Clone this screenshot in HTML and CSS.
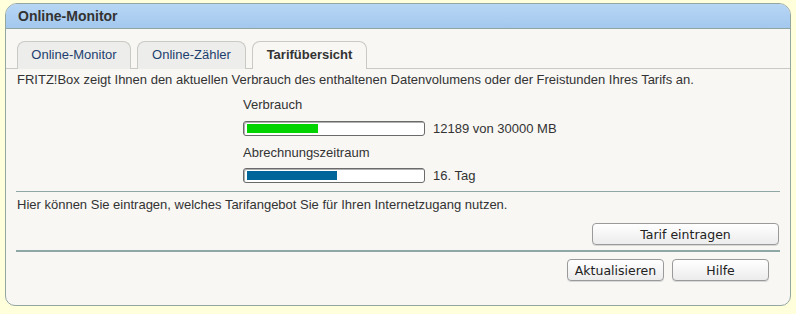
FILE: index.html
```html
<!DOCTYPE html>
<html lang="de">
<head>
<meta charset="utf-8">
<title>Online-Monitor</title>
<link rel="stylesheet" href="styles.css">
</head>
<body>
<div class="panel">
  <div class="header">Online-Monitor</div>
  <div class="body">
    <div class="tabs">
      <div class="tab tab-1">Online-Monitor</div>
      <div class="tab tab-2">Online-Zähler</div>
      <div class="tab tab-3 active">Tarifübersicht</div>
    </div>
    <div class="content">
      <p class="text intro">FRITZ!Box zeigt Ihnen den aktuellen Verbrauch des enthaltenen Datenvolumens oder der Freistunden Ihres Tarifs an.</p>
      <div class="meters">
        <div class="label">Verbrauch</div>
        <div class="meter-row meter-row-1">
          <div class="bar"><div class="fill fill-green" style="width:40.6%"></div></div>
          <span class="value">12189 von 30000 MB</span>
        </div>
        <div class="label">Abrechnungszeitraum</div>
        <div class="meter-row meter-row-2">
          <div class="bar"><div class="fill fill-blue" style="width:51.6%"></div></div>
          <span class="value">16. Tag</span>
        </div>
      </div>
      <div class="rule"></div>
      <p class="text info">Hier können Sie eintragen, welches Tarifangebot Sie für Ihren Internetzugang nutzen.</p>
      <div class="btn-row btn-row-tarif">
        <button class="btn btn-tarif">Tarif eintragen</button>
      </div>
      <div class="rule rule-thick"></div>
      <div class="btn-row btn-row-main">
        <button class="btn btn-main">Aktualisieren</button>
        <button class="btn btn-main">Hilfe</button>
      </div>
    </div>
  </div>
</div>
</body>
</html>
```

FILE: styles.css
```css
html, body {
  margin: 0;
  padding: 0;
}
body {
  background: #ffffdc;
  font-family: "Liberation Sans", Arial, sans-serif;
  font-size: 13px;
  color: #333;
  padding: 3px 5px 0 5px;
}
.panel {
  width: 784px;
  height: 301px;
  border: 1px solid #94a6a0;
  border-radius: 12px 12px 10px 10px;
  background: #f8f7f3;
  overflow: hidden;
  box-sizing: content-box;
}
.header {
  height: 24px;
  background: linear-gradient(#b7d6f4, #a3c8ee);
  border-bottom: 1px solid #8fa59f;
  font-weight: bold;
  font-size: 14px;
  line-height: 24px;
  padding-left: 12px;
  color: #333;
}
.body {
  padding-top: 12px;
}
.tabs {
  display: flex;
  gap: 6px;
  padding-left: 11px;
  border-bottom: 1px solid #c9c9c6;
  height: 27px;
}
.tab {
  box-sizing: border-box;
  height: 28px;
  border: 1px solid #c9c9c6;
  border-bottom: none;
  border-radius: 8px 8px 0 0;
  background: #ededeb;
  color: #1d3f6e;
  font-size: 13px;
  line-height: 25px;
  text-align: center;
}
.tab-1 { width: 114px; }
.tab-2 { width: 109px; }
.tab-3 { width: 115px; }
.tab.active {
  background: #f8f7f3;
  color: #333;
  font-weight: bold;
}
.content {
  padding: 0 10px 0 10px;
}
.text {
  margin: 0;
  line-height: 16px;
  padding-left: 1px;
}
.intro {
  padding-top: 3px;
}
.meters {
  margin-left: 227px;
  padding-top: 9px;
}
.label {
  line-height: 16px;
}
.meter-row {
  display: flex;
  align-items: center;
  gap: 8px;
  height: 15px;
}
.meter-row-1 {
  margin-top: 8px;
  margin-bottom: 9px;
}
.meter-row-2 {
  margin-top: 7px;
  margin-bottom: 8px;
}
.bar {
  box-sizing: border-box;
  width: 182px;
  height: 15px;
  border: 1px solid #6a6a6a;
  border-radius: 3px;
  background: #fff;
  box-shadow: inset 1px 1px 0 #b0b0b0;
  padding: 2px 3px;
}
.fill {
  height: 9px;
}
.fill-green { background: #00d300; }
.fill-blue { background: #006699; }
.value {
  line-height: 16px;
}
.rule {
  height: 1px;
  background: #8fa8a5;
  margin-top: 2px;
}
.info {
  padding-top: 5px;
}
.btn-row {
  display: flex;
  justify-content: flex-end;
  gap: 8px;
}
.btn-row-tarif {
  padding-top: 10px;
  padding-right: 1px;
  padding-bottom: 5px;
}
.rule-thick {
  height: 2px;
  margin-top: 0;
}
.btn-row-main {
  padding-top: 7px;
  padding-right: 11px;
}
.btn {
  font-family: "DejaVu Sans", "Lucida Grande", sans-serif;
  font-size: 12.5px;
  color: #222;
  height: 22px;
  padding: 0;
  border: 1px solid #9a9a9a;
  border-radius: 4px;
  background: linear-gradient(#ffffff, #ececec);
  box-shadow: 0 1px 0 #d8d8d8;
}
.btn-tarif { width: 187px; }
.btn-main { width: 97px; }
```
